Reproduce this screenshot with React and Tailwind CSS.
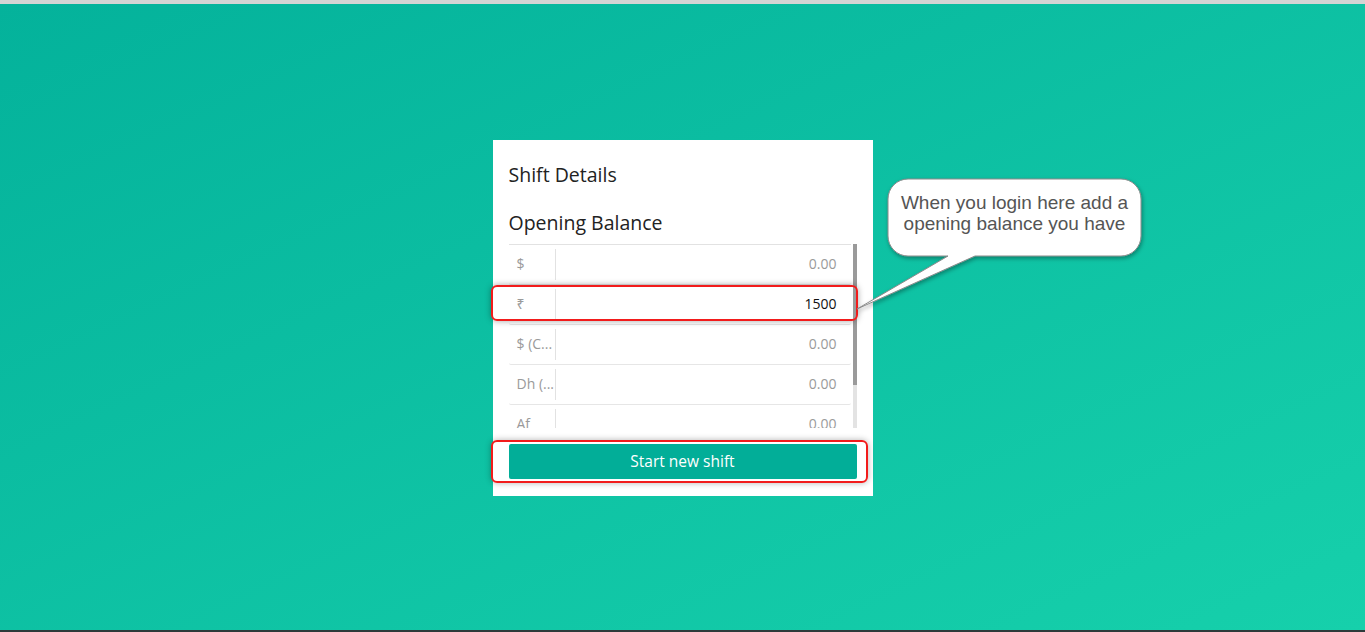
import React from "react";

const rows = [
  { cur: "$", val: "0.00" },
  { cur: "₹", val: "1500", active: true },
  { cur: "$ (C...", val: "0.00" },
  { cur: "Dh (...", val: "0.00" },
  { cur: "Af", val: "0.00" },
];

export default function App() {
  return (
    <div className="h-[632px] w-[1365px] flex flex-col overflow-hidden" style={{ fontFamily: "'Open Sans', 'Noto Sans', sans-serif" }}>
      <div className="h-[4px] bg-[#d4d4d4]" />
      <div className="relative flex-1 flex items-center justify-center bg-gradient-to-br from-[#04b29b] to-[#16d0ab]">
        <div className="relative mt-[2px] w-[380px] bg-white px-4 pt-[22px] pb-[17px] flex flex-col">
          <div className="text-[19.5px] leading-[26px] text-[#222]">Shift Details</div>
          <div className="mt-[22px] text-[19.5px] leading-[26px] text-[#222]">Opening Balance</div>
          <div className="mt-[8px] flex h-[184px] overflow-hidden">
            <div className="flex-1 flex flex-col border-t border-[#e2e2e2]">
              {rows.map((r, i) => (
                <div key={i} className="flex h-[40px] shrink-0 border-b border-[#e6e6e6] rounded-[2px]">
                  <div className="w-[47px] flex items-center pl-2 pb-[2px] border-r border-[#e2e2e2] my-[4px] text-[14px] text-[#9a9a9a]">{r.cur}</div>
                  <div className={`flex-1 flex items-center justify-end pr-[14px] pb-[2px] text-[14px] ${r.active ? "text-[#111]" : "text-[#9a9a9a]"}`}>{r.val}</div>
                </div>
              ))}
            </div>
            <div className="w-[4px] ml-[2px] bg-[#e3e3e3] flex flex-col">
              <div className="h-[141px] bg-[#9a9a9a]" />
            </div>
          </div>
          <button className="mt-[16px] h-[35px] w-full rounded-[2px] bg-[#02ae98] text-white text-[15.5px]">Start new shift</button>
        </div>

        {/* annotation: red box around row */}
        <div className="absolute left-[491px] top-[281px] w-[367px] h-[36px] rounded-[6px] border-2 border-[#f21b1b] shadow-[0_0_6px_rgba(0,0,0,0.35)]" />
        {/* annotation: red box around button */}
        <div className="absolute left-[491px] top-[436px] w-[377px] h-[43px] rounded-[6px] border-2 border-[#f21b1b] shadow-[0_0_6px_rgba(0,0,0,0.3)]" />

        {/* callout */}
        <svg className="absolute left-[850px] top-[170px]" width="300" height="145" viewBox="0 0 300 145">
          <defs>
            <filter id="sh" x="-20%" y="-20%" width="140%" height="140%">
              <feDropShadow dx="1" dy="2" stdDeviation="2" floodColor="#000" floodOpacity="0.35" />
            </filter>
          </defs>
          <path
            d="M58 5 H271 A20 20 0 0 1 291 25 V62 A20 20 0 0 1 271 82 H125 L7 135 L98 82 H58 A20 20 0 0 1 38 62 V25 A20 20 0 0 1 58 5 Z"
            fill="#fff"
            stroke="#8a8a8a"
            strokeWidth="1"
            filter="url(#sh)"
          />
        </svg>
        <div className="absolute left-[888px] top-[188px] w-[253px] text-center text-[19px] leading-[21px] text-[#555]" style={{ fontFamily: "'Liberation Sans', Arial, sans-serif" }}>
          When you login here add a<br />opening balance you have
        </div>
      </div>
      <div className="h-[2px] bg-[#2d3a3a]" />
    </div>
  );
}
